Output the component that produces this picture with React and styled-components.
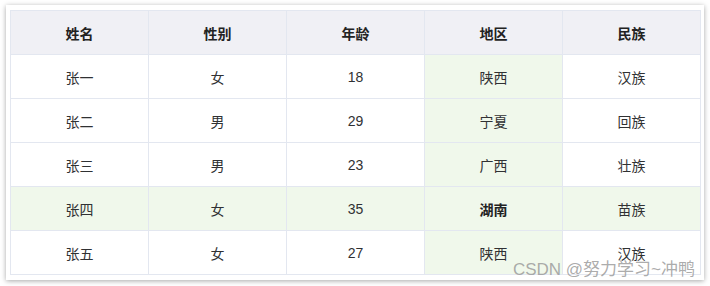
import React from "react"
import styled, { createGlobalStyle } from "styled-components"

const GlobalStyle = createGlobalStyle`
  body {
    margin: 0;
    background: #ffffff;
    font-family: "Liberation Sans", "Noto Sans CJK SC", sans-serif;
  }
`

const columns = ["姓名", "性别", "年龄", "地区", "民族"]

const rows = [
  { name: "张一", sex: "女", age: 18, area: "陕西", nation: "汉族" },
  { name: "张二", sex: "男", age: 29, area: "宁夏", nation: "回族" },
  { name: "张三", sex: "男", age: 23, area: "广西", nation: "壮族" },
  { name: "张四", sex: "女", age: 35, area: "湖南", nation: "苗族", active: true },
  { name: "张五", sex: "女", age: 27, area: "陕西", nation: "汉族" },
]

const App = () => {
  return (
    <>
      <GlobalStyle />
      <Page>
        <Panel>
          <Table>
            <thead>
              <tr>
                {columns.map(col => (
                  <HeadCell key={col}>{col}</HeadCell>
                ))}
              </tr>
            </thead>
            <tbody>
              {rows.map(row => (
                <Row key={row.name} $active={row.active}>
                  <Cell>{row.name}</Cell>
                  <Cell>{row.sex}</Cell>
                  <Cell>{row.age}</Cell>
                  <Cell $highlight $bold={row.active}>
                    {row.area}
                  </Cell>
                  <Cell>{row.nation}</Cell>
                </Row>
              ))}
            </tbody>
          </Table>
          <Watermark>CSDN @努力学习~冲鸭</Watermark>
        </Panel>
      </Page>
    </>
  )
}

const Page = styled.div`
  padding: 5px 6px 7px 6px;
  width: 698px;
`

const Panel = styled.div`
  position: relative;
  background: #ffffff;
  padding: 5px 3px 5px 4px;
  box-shadow: 0 1px 5px rgba(0, 0, 0, 0.35);
`

const Table = styled.table`
  border-collapse: collapse;
  table-layout: fixed;
  width: 691px;
  font-size: 14px;
  color: #303133;
`

const HeadCell = styled.th`
  height: 43px;
  padding: 0;
  background: #f0f0f5;
  border: 1px solid #e3e7f0;
  font-weight: bold;
  color: #222;
  text-align: center;
`

const Row = styled.tr`
  background: ${p => (p.$active ? "#f0f8eb" : "#ffffff")};
`

const Cell = styled.td`
  height: 43px;
  padding: 0;
  border: 1px solid #e3e7f0;
  text-align: center;
  background: ${p => (p.$highlight ? "#f0f8eb" : "transparent")};
  font-weight: ${p => (p.$bold ? "bold" : "normal")};
  color: ${p => (p.$bold ? "#222" : "#303133")};
`

const Watermark = styled.div`
  position: absolute;
  right: 9px;
  bottom: 0;
  font-size: 17px;
  line-height: 20px;
  color: rgba(150, 150, 150, 0.8);
  white-space: nowrap;
  pointer-events: none;
`

export default App
